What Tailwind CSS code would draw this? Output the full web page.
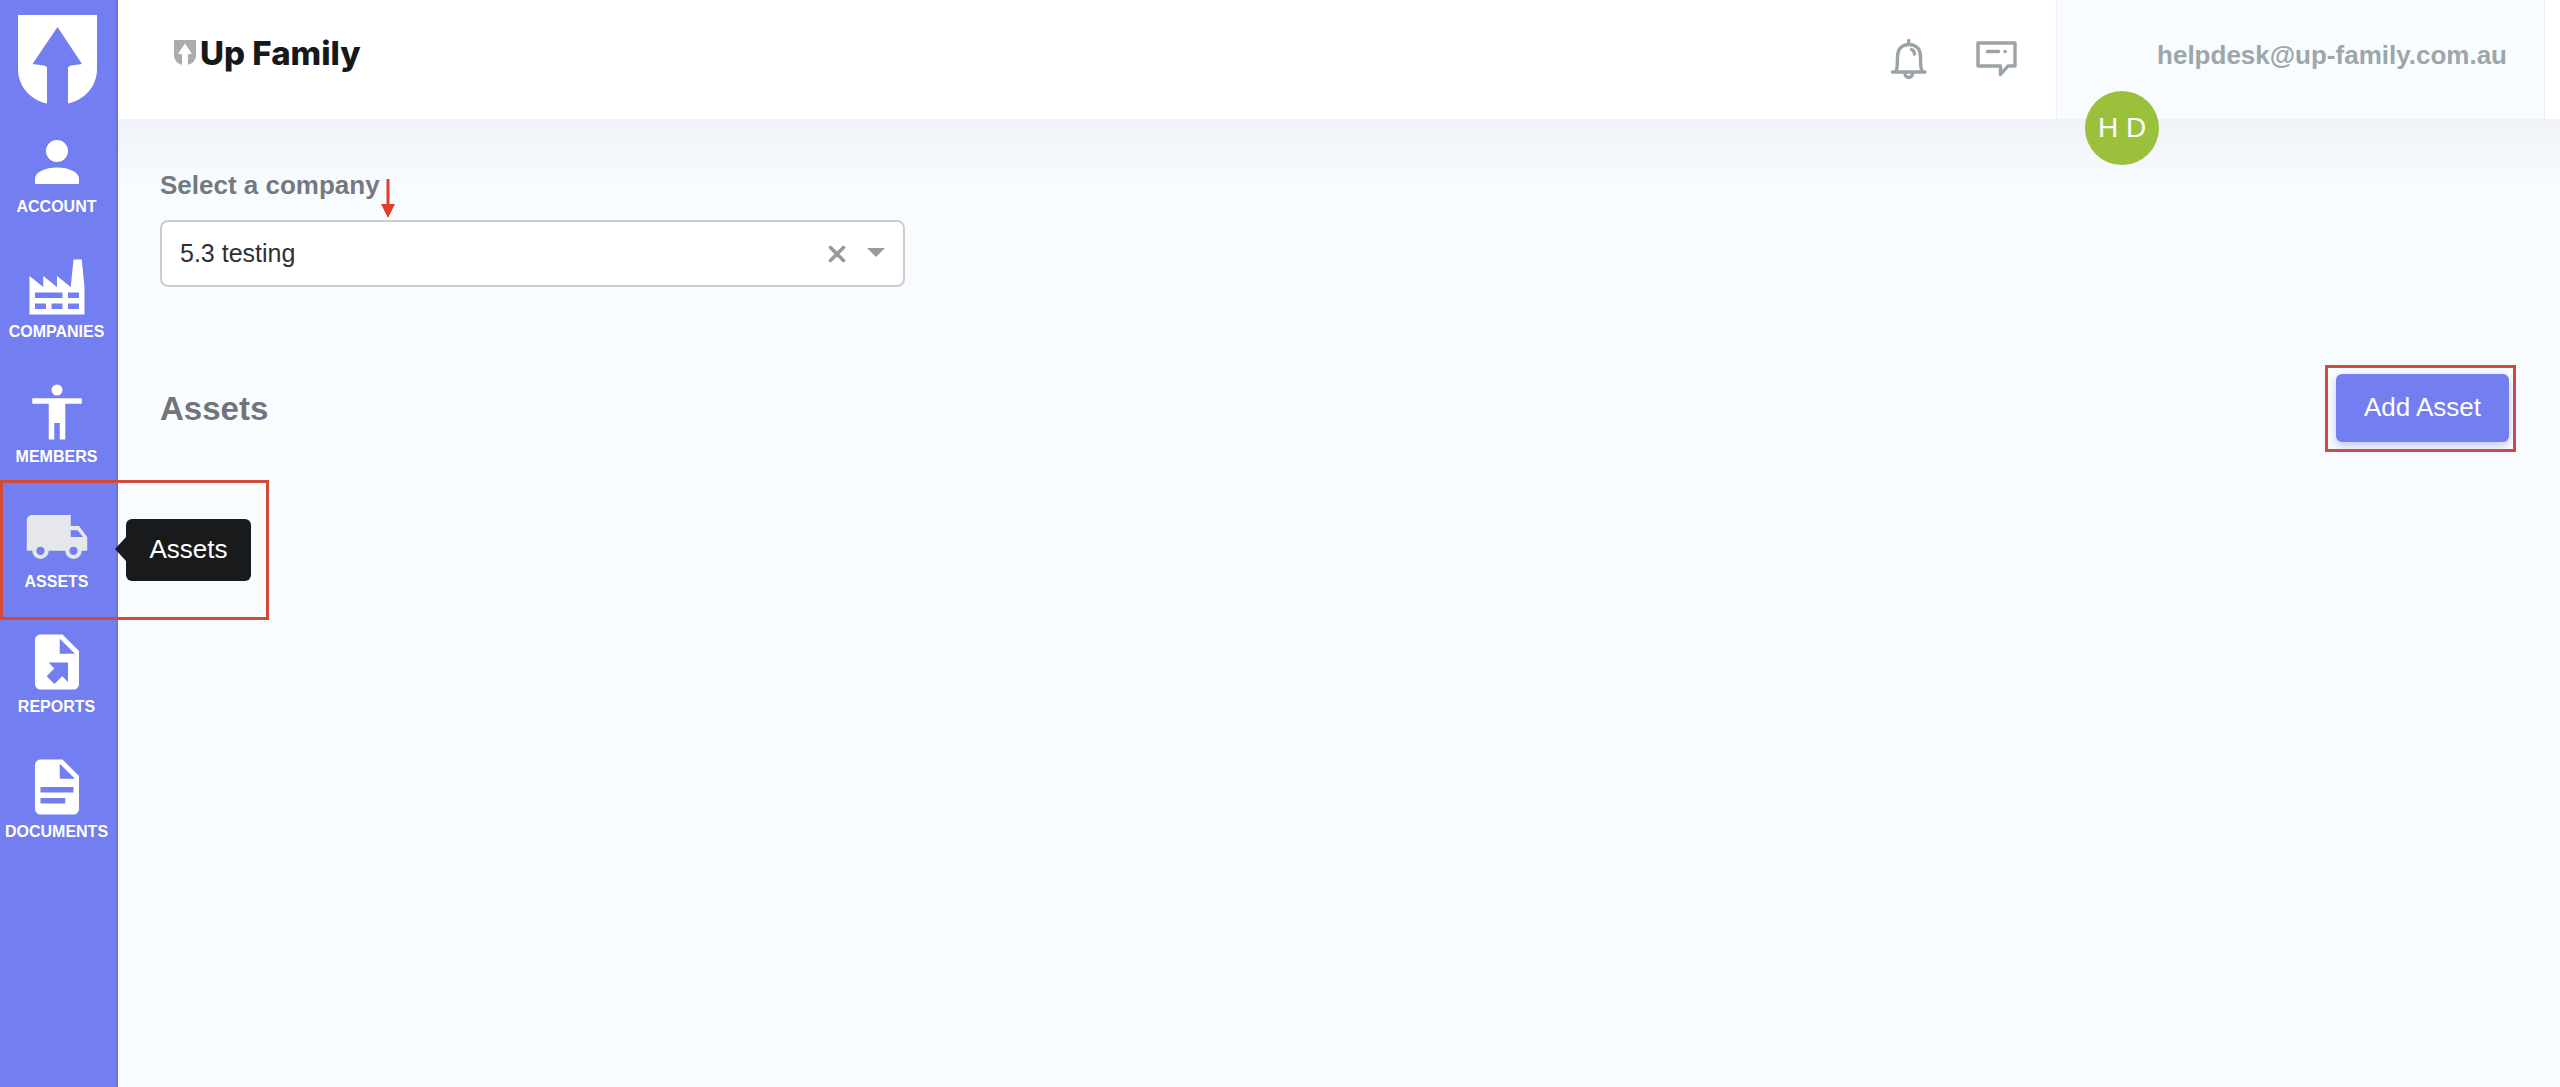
<!DOCTYPE html>
<html lang="en">
<head>
  <meta charset="UTF-8" />
  <meta name="viewport" content="width=device-width, initial-scale=1.0"/>
  <title>Up Family - Assets</title>
  <script src="https://cdn.jsdelivr.net/npm/@tailwindcss/browser@4"></script>
</head>
<body class="min-h-screen flex bg-[#f9fcff] font-['Liberation_Sans',Arial,sans-serif]">

  <!-- Sidebar -->
  <aside class="w-[118px] shrink-0 bg-[#737ef0] border-r-2 border-[#6a73dd] relative z-10">
    <a href="#" aria-label="Up Family" class="block pt-[15px] pl-[18px] h-[129px]">
      <svg class="w-[79px] h-[89px]" viewBox="0 0 79 89" fill="#fff">
        <path d="M0 0H79V54C79 71 67 85 50 88.500V53C50 51.500 51 51 53 50.500L64 49L39.500 12L14.500 49L26 50.500C28 51 29 51.500 29 53V88.500C12 85 0 71 0 54Z"/>
      </svg>
    </a>

    <nav class="flex flex-col gap-[35px] text-base font-bold leading-6 text-white">
      <a href="#" class="flex flex-col items-center pr-[3px]">
        <svg class="size-[66px]" viewBox="0 0 24 24" fill="currentColor"><path d="M12 4a4 4 0 1 1 0 8 4 4 0 0 1 0-8M12 14c4.420 0 8 1.790 8 4v2H4v-2c0-2.210 3.580-4 8-4Z"/></svg>
        ACCOUNT
      </a>
      <a href="#" class="flex flex-col items-center pr-[3px]">
        <svg class="size-[66px]" viewBox="0 0 24 24" fill="currentColor"><path d="M4 18v2h4v-2H4M4 14v2h10v-2H4M10 18v2h4v-2h-4M16 14v2h4v-2h-4M16 18v2h4v-2h-4M2 22V8l5 4V8l5 4V8l5 4 1-10h3l1 10v10H2Z"/></svg>
        COMPANIES
      </a>
      <a href="#" class="flex flex-col items-center pr-[3px]">
        <svg class="size-[66px]" viewBox="0 0 24 24" fill="currentColor"><path d="M21 9h-6v13h-2v-6h-2v6H9V9H3V7h18v2M12 2a2 2 0 1 1 0 4 2 2 0 0 1 0-4Z"/></svg>
        MEMBERS
      </a>
      <a href="#" class="relative flex flex-col items-center pr-[3px]" aria-describedby="assetsTip">
        <svg class="size-[66px] text-[#e6e7ea]" viewBox="0 0 24 24" fill="currentColor"><path d="M20 8h-3V4H3C1.890 4 1 4.890 1 6v11h2a3 3 0 0 0 6 0h6a3 3 0 0 0 6 0h2v-5l-3-4M6 18.500a1.500 1.500 0 1 1 0-3 1.500 1.500 0 0 1 0 3M19.500 9.500l1.960 2.500H17V9.500h2.500M18 18.500a1.500 1.500 0 1 1 0-3 1.500 1.500 0 0 1 0 3Z"/></svg>
        ASSETS
        <!-- Tooltip -->
        <span id="assetsTip" role="tooltip" class="absolute left-[126px] top-[15px] w-[125px] h-[62px] rounded-md bg-[#191a1c] text-center text-[26px] leading-[60px] font-normal">
          <svg class="absolute right-full top-[18px] w-[11px] h-6" viewBox="0 0 11 24" fill="#191a1c"><path d="M11 0V24L0 12Z"/></svg>
          Assets
        </span>
        <span class="absolute left-0 -top-6 w-[269px] h-[140px] border-[3px] border-[#d24a3a]"></span>
      </a>
      <a href="#" class="flex flex-col items-center pr-[3px]">
        <svg class="size-[66px]" viewBox="0 0 24 24" fill="currentColor"><path d="M6 2c-1.110 0-2 .9-2 2v16a2 2 0 0 0 2 2h12a2 2 0 0 0 2-2V8l-6-6M13 3.500 18.500 9H13M8.930 12.220H16v7.070l-2.120-2.120L11.050 20l-2.830-2.830 2.830-2.820"/></svg>
        REPORTS
      </a>
      <a href="#" class="flex flex-col items-center pr-[3px]">
        <svg class="size-[66px]" viewBox="0 0 24 24" fill="currentColor"><path d="M13 9h5.500L13 3.500V9M6 2h8l6 6v12a2 2 0 0 1-2 2H6a2 2 0 0 1-2-2V4c0-1.110.890-2 2-2m9 16v-2H6v2h9m3-4v-2H6v2h12Z"/></svg>
        DOCUMENTS
      </a>
    </nav>
  </aside>

  <div class="flex-1 min-w-0 flex flex-col">
    <!-- Top bar -->
    <header class="h-[119px] bg-white flex items-center pl-14 pr-[15px]">
      <a href="#" class="flex items-center gap-1 pb-3.5 font-['Inter',sans-serif] font-extrabold text-[33px] leading-10 text-[#17181a]">
        <svg class="w-[22px] h-[25px]" viewBox="0 0 79 89" fill="#a9adb0">
          <path d="M0 0H79V54C79 71 67 85 50 88.500V53C50 51.500 51 51 53 50.500L64 49L39.500 12L14.500 49L26 50.500C28 51 29 51.500 29 53V88.500C12 85 0 71 0 54Z"/>
        </svg>
        Up Family
      </a>

      <div class="ml-auto mr-[38px] flex gap-[43px] text-[#9aa3a8]">
        <button type="button" aria-label="Notifications">
          <svg class="size-11" viewBox="0 0 44 44" fill="none" stroke="currentColor" stroke-width="3.400" stroke-linecap="round" stroke-linejoin="round">
            <path d="M21.700 2.500V6M5.500 34H38M9 33.500C10.500 30 10.500 26 10.500 19C10.500 11 15 6.500 22 6.500S33.500 11 33.500 19C33.500 26 33.500 30 35 33.500M18 35C18 41 25.500 41 25.500 35M24.500 11.500C26 12 27.300 13.800 27.500 16"/>
          </svg>
        </button>
        <button type="button" aria-label="Messages">
          <svg class="size-11" viewBox="0 0 44 44" fill="none" stroke="currentColor" stroke-width="3.400" stroke-linecap="round" stroke-linejoin="round">
            <path d="M4 5H41V28H34L26.500 36.500V28H4ZM13.500 13.500H24.500M31 13.500H31.300"/>
          </svg>
        </button>
      </div>

      <div class="relative self-stretch w-[489px] border-x border-[#eceff5] bg-[#f9fcff] pt-10 pr-[37px] text-right">
        <a href="#" class="text-[26px] leading-[30px] font-bold text-[#9da6ab] block">helpdesk@up-family.com.au</a>
        <span class="absolute left-7 top-[91px] size-[74px] rounded-full bg-[#9bc13c] text-white text-[28px] leading-[73px] text-center">H D</span>
      </div>
    </header>

    <main class="flex-1 pl-[42px] pr-11 pt-[47px] bg-[linear-gradient(to_bottom,#eff2f7,#f9fcff_72px)]">
      <div class="flex items-start gap-px h-[54px]">
        <label for="company" class="text-[26px] leading-[38px] font-bold text-[#737980]">Select a company</label>
        <svg class="w-3.5 h-10 mt-3" viewBox="0 0 14 40" fill="#e33e2b"><path d="M5.500 1H8.500V26H14L7 40L0 26H5.500Z"/></svg>
      </div>

      <div class="flex items-center w-full max-w-[745px] h-[67px] rounded-lg border-2 border-[#cbccd0] bg-white text-[#999]">
        <select id="company" class="flex-1 h-full pl-[18px] appearance-none bg-transparent text-[25px] text-[#2f3033] outline-none">
          <option>5.3 testing</option>
        </select>
        <button type="button" aria-label="Clear" class="mr-[21px]">
          <svg class="size-[18px]" viewBox="0 0 18 18" stroke="currentColor" stroke-width="3.500" stroke-linecap="round"><path d="M2.500 2.500 15.500 15.500M15.500 2.500 2.500 15.500"/></svg>
        </button>
        <svg class="w-[18px] h-[9px] mr-[18px] mb-0.5" viewBox="0 0 18 9" fill="currentColor"><path d="M0 0H18L9 9Z"/></svg>
      </div>

      <div class="flex items-center justify-between mt-[78px]">
        <h1 class="text-[33px] leading-10 font-bold text-[#6f757b]">Assets</h1>
        <div class="border-[3px] border-[#d24a3a] pl-2 pr-1 pt-1.5 pb-[7px]">
          <button type="button" class="h-[68px] px-7 pb-0.5 rounded-md bg-[#737ef0] text-white text-[26px] shadow-[0_4px_10px_rgba(115,126,240,0.4)]">Add Asset</button>
        </div>
      </div>
    </main>
  </div>

</body>
</html>
